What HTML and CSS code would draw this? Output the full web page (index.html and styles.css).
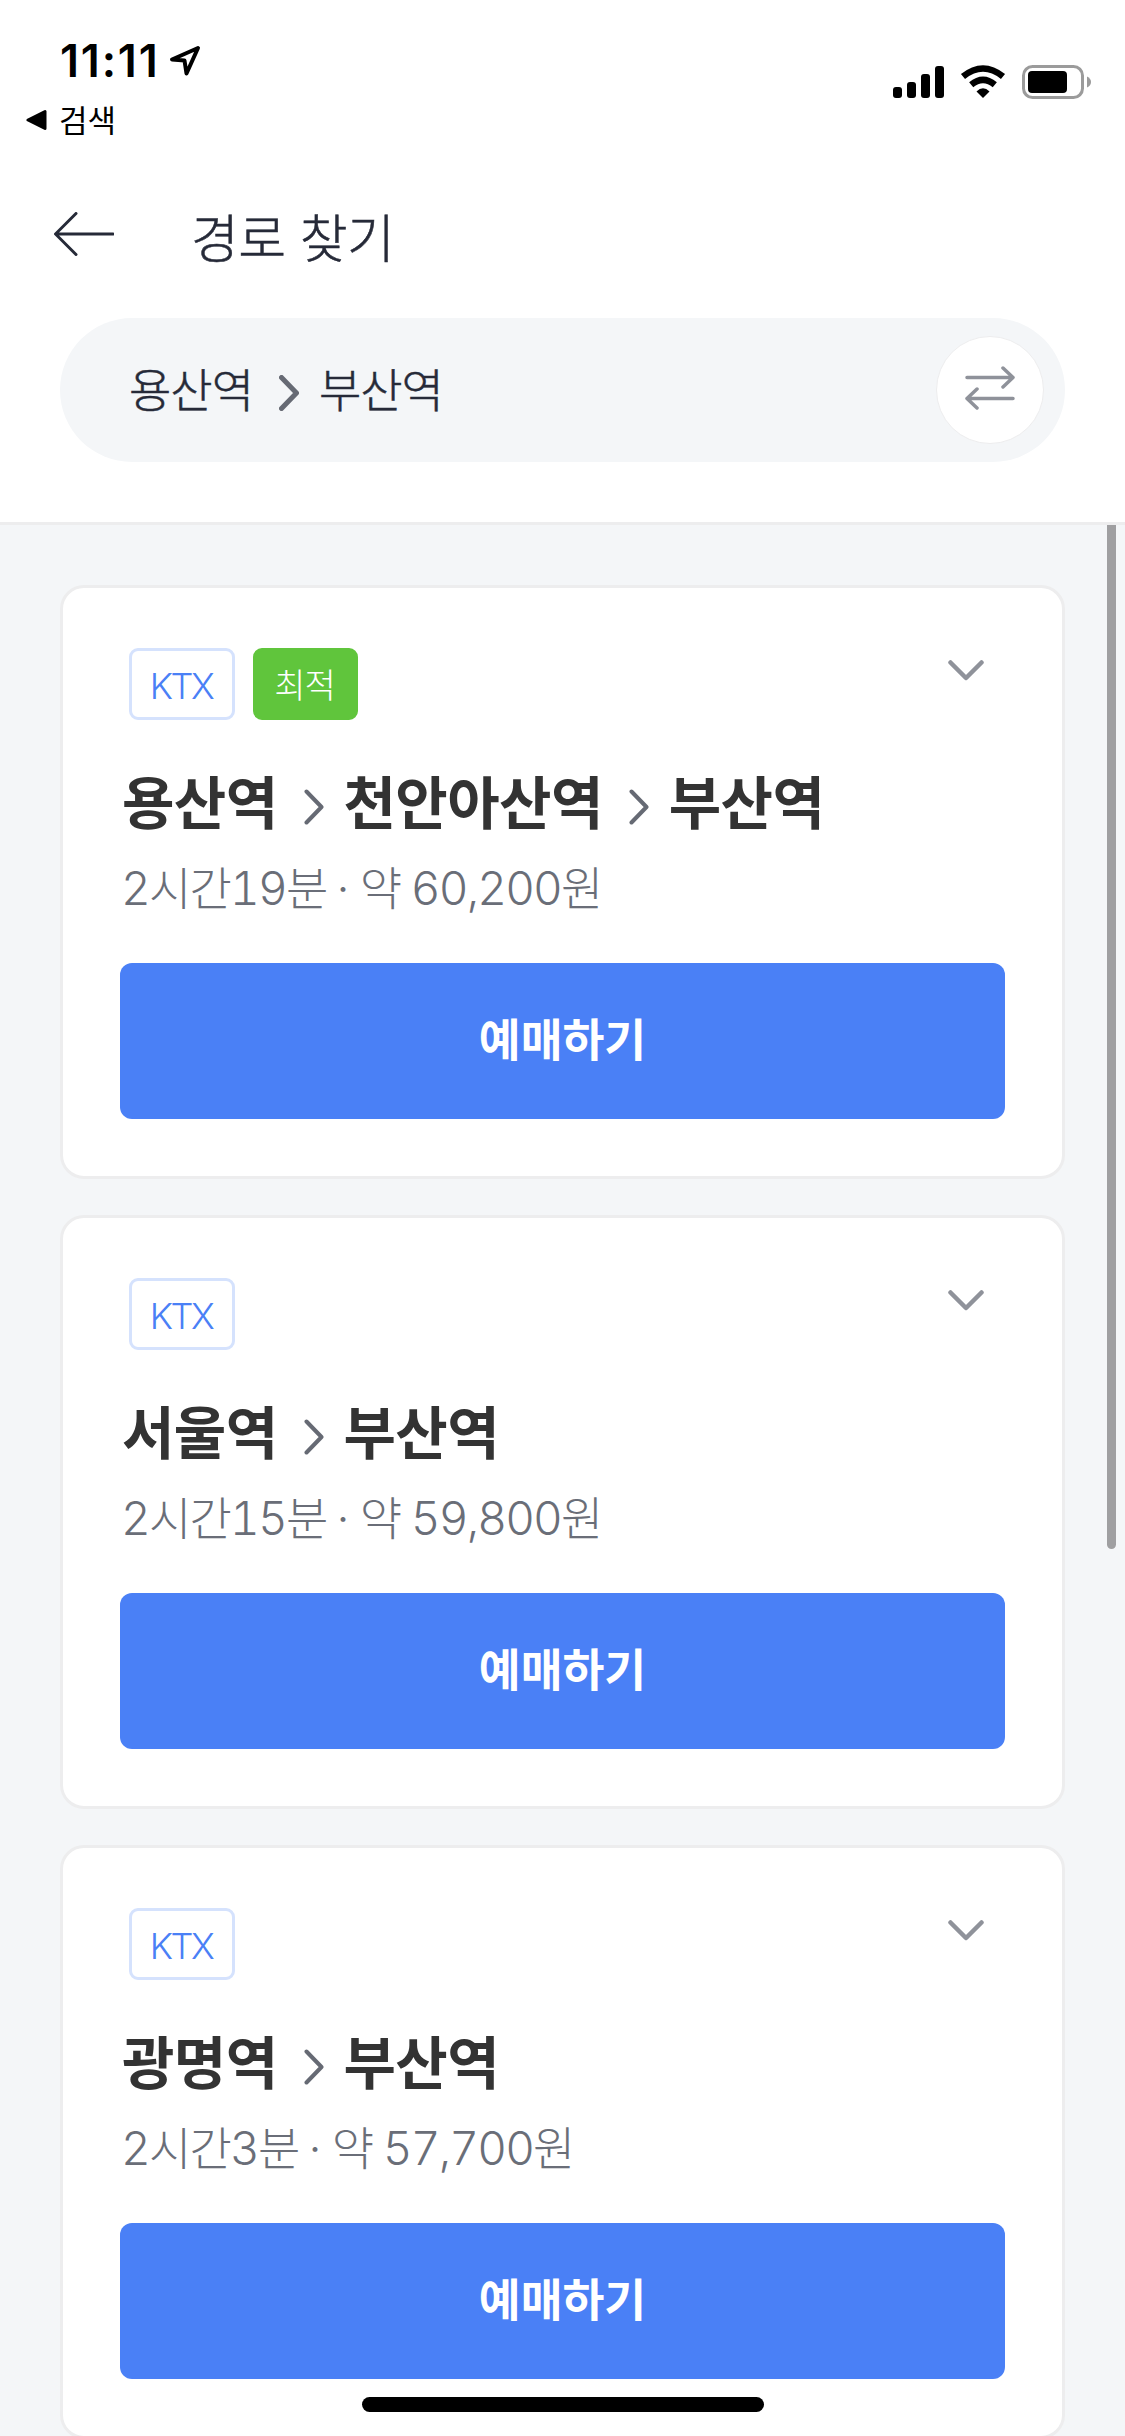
FILE: index.html
```html
<!DOCTYPE html>
<html lang="ko">
<head>
<meta charset="utf-8">
<title>경로 찾기</title>
<link rel="stylesheet" href="styles.css">
</head>
<body>
<svg class="defs" aria-hidden="true">
  <symbol id="next" viewBox="0 0 20 36"><path d="M2.5 2.5 17.5 18 2.5 33.500"/></symbol>
  <symbol id="down" viewBox="0 0 36 21"><path d="M2.500 2.500 18 18 33.500 2.500"/></symbol>
</svg>
<div class="screen">
  <header class="top">
    <div class="status">
      <div class="status-left">
        <div class="clock">
          <span class="time">11:11</span>
          <svg class="location" viewBox="0 0 32 32"><path d="M29 3 3 14.500 15.500 15.500 17.500 28.500Z"/></svg>
        </div>
        <div class="return">
          <svg class="triangle" viewBox="0 0 21 22"><path d="M2 11 19 2.500V19.500Z"/></svg>
          <span class="return-label">검색</span>
        </div>
      </div>
      <svg class="status-icons" viewBox="0 0 199 34">
        <rect x="0" y="22" width="9" height="11" rx="3"/>
        <rect x="14" y="17" width="9" height="16" rx="3"/>
        <rect x="28" y="9" width="9" height="24" rx="3"/>
        <rect x="42" y="1" width="9" height="32" rx="3"/>
        <path class="wave" d="M70 11.500Q90 -4.500 110 11.500"/>
        <path class="wave" d="M78.200 19.700Q90 10 101.800 19.700"/>
        <path d="M90 33 83.500 26.500Q90 20 96.500 26.500Z"/>
        <rect class="shell" x="130.500" y="1.500" width="59" height="31" rx="9"/>
        <rect x="135" y="6" width="39" height="22" rx="4"/>
        <path class="nub" d="M194 11.500Q198 13.500 198 17T194 22.500Z"/>
      </svg>
    </div>
    <div class="titlebar">
      <svg class="back" viewBox="0 0 60 44"><path d="M59 22H2M22 1.500 1.500 22 22 42.500"/></svg>
      <h1 class="title">경로 찾기</h1>
    </div>
    <div class="search">
      <span class="place">용산역</span>
      <svg class="next next-search"><use href="#next"/></svg>
      <span class="place">부산역</span>
      <button class="swap">
        <svg class="swap-icon" viewBox="0 0 50 44"><path d="M2 11.500H48M38 2 48 11.500 38 21M48 32.500H2M12 23 2 32.500 12 42"/></svg>
      </button>
    </div>
  </header>
  <main class="list">
    <article class="card">
      <div class="badges">
        <span class="badge">KTX</span>
        <span class="badge best">최적</span>
        <svg class="down"><use href="#down"/></svg>
      </div>
      <h2 class="route"><span>용산역</span><svg class="next"><use href="#next"/></svg><span>천안아산역</span><svg class="next"><use href="#next"/></svg><span>부산역</span></h2>
      <p class="info">2시간19분<span class="dot">·</span>약 60,200원</p>
      <button class="book">예매하기</button>
    </article>
    <article class="card">
      <div class="badges">
        <span class="badge">KTX</span>
        <svg class="down"><use href="#down"/></svg>
      </div>
      <h2 class="route"><span>서울역</span><svg class="next"><use href="#next"/></svg><span>부산역</span></h2>
      <p class="info">2시간15분<span class="dot">·</span>약 59,800원</p>
      <button class="book">예매하기</button>
    </article>
    <article class="card">
      <div class="badges">
        <span class="badge">KTX</span>
        <svg class="down"><use href="#down"/></svg>
      </div>
      <h2 class="route"><span>광명역</span><svg class="next"><use href="#next"/></svg><span>부산역</span></h2>
      <p class="info">2시간3분<span class="dot">·</span>약 57,700원</p>
      <button class="book">예매하기</button>
    </article>
    <div class="scrollbar"></div>
  </main>
  <div class="home"></div>
</div>
</body>
</html>
```
FILE: styles.css
```css
* { box-sizing: border-box; margin: 0; padding: 0; }

body {
  font-family: "Noto Sans CJK KR", sans-serif;
  color: #262a38;
  background: #f4f6f8;
}

.defs { position: absolute; width: 0; height: 0; }

.screen {
  position: relative;
  width: 1125px;
  height: 2436px;
  overflow: hidden;
  display: flex;
  flex-direction: column;
}

button { border: 0; font: inherit; }

/* Header */
.top {
  flex: none;
  height: 525px;
  background: #fff;
  border-bottom: 3px solid #ededee;
}

.status {
  height: 186px;
  padding: 32px 34px 0 26px;
  display: flex;
  justify-content: space-between;
  color: #000;
}

.clock { display: flex; align-items: center; height: 58px; padding-left: 34px; }
.time { width: 109px; font: 600 45px/58px Inter, sans-serif; letter-spacing: 1.800px; }
.location { width: 32px; height: 32px; fill: none; stroke: #000; stroke-width: 4; stroke-linejoin: round; }
.return { display: flex; align-items: center; height: 58px; gap: 12px; }
.triangle { width: 21px; height: 22px; margin-top: 2px; stroke: #000; stroke-width: 3; stroke-linejoin: round; }
.return-label { font-size: 31px; line-height: 58px; }
.status-icons { width: 199px; height: 34px; margin-top: 33px; margin-right: -1px; }
.wave { fill: none; stroke: #000; stroke-width: 6.500; }
.shell { fill: none; stroke: #9b9b9b; stroke-width: 3; }
.nub { fill: #9b9b9b; }

.titlebar { height: 132px; padding: 12px 0 0 54px; display: flex; }
.back { width: 60px; height: 44px; margin: 14px 77px 0 0; fill: none; stroke: #262a38; stroke-width: 3; stroke-linecap: round; }
.title { font-size: 52px; font-weight: 300; line-height: 76px; letter-spacing: -0.500px; -webkit-text-stroke: 0.500px; }

.search {
  height: 144px;
  margin: 0 60px;
  padding: 0 21px 0 69px;
  border-radius: 72px;
  background: #f4f6f8;
  display: flex;
  align-items: center;
}
.place { font-size: 46px; font-weight: 300; line-height: 70px; margin-top: -6px; letter-spacing: -1px; -webkit-text-stroke: 0.500px; }
.next { width: 20px; height: 36px; fill: none; stroke: #666a74; stroke-width: 4; stroke-linecap: round; stroke-linejoin: round; }
.next-search { margin: 6px 20px 0 26px; stroke-width: 5; }
.swap {
  width: 108px;
  height: 108px;
  margin-left: auto;
  border: 1px solid #ededee;
  border-radius: 50%;
  background: #fff;
  display: grid;
  place-items: center;
}
.swap-icon { width: 50px; height: 44px; margin-top: -4px; fill: none; stroke: #8f929a; stroke-width: 3.500; stroke-linecap: round; stroke-linejoin: round; }

/* Route list */
.list {
  position: relative;
  padding: 60px 60px 0;
  display: flex;
  flex-direction: column;
  gap: 36px;
}
.card {
  height: 594px;
  padding: 60px 57px 57px;
  border: 3px solid #ededee;
  border-radius: 24px;
  background: #fff;
}
.badges { display: flex; gap: 18px; height: 72px; padding-left: 9px; }
.badge {
  width: 106px;
  border: 3px solid #d5e2fd;
  border-radius: 9px;
  color: #4a80f6;
  font-family: Inter, "Noto Sans CJK KR", sans-serif;
  font-size: 36px;
  font-weight: 300;
  line-height: 70px;
  text-align: center;
  letter-spacing: -2.500px;
  text-indent: -2px;
}
.best {
  width: 105px;
  border-color: #60c53c;
  background: #60c53c;
  color: #fff;
  font-family: "Noto Sans CJK KR", sans-serif;
  font-size: 34px;
  line-height: 66px;
  letter-spacing: -1px;
}
.down { width: 36px; height: 21px; margin: 12px 21px 0 auto; fill: none; stroke: #8f929a; stroke-width: 4.500; stroke-linecap: round; stroke-linejoin: round; }
.route {
  height: 80px;
  margin-top: 43px;
  padding-left: 2px;
  display: flex;
  align-items: center;
  color: #333;
  font-size: 57px;
  font-weight: 700;
  line-height: 80px;
  letter-spacing: -0.600px;
}
.route span { margin-top: -8px; }
.route .next { margin: 8px 20px 0 26px; }
.info {
  height: 70px;
  margin-top: 10px;
  padding-left: 1px;
  color: #6a6e78;
  font-family: Inter, "Noto Sans CJK KR", sans-serif;
  font-size: 46px;
  font-weight: 300;
  font-variant-numeric: tabular-nums;
  font-kerning: none;
  line-height: 71px;
  letter-spacing: -1.800px;
  white-space: pre;
}
.dot { margin: 0 12px 0 10px; }
.book {
  display: block;
  width: 100%;
  height: 156px;
  margin-top: 40px;
  padding-bottom: 7px;
  border-radius: 12px;
  background: #4a80f6;
  color: #fff;
  font-size: 45.500px;
  font-weight: 700;
  line-height: 149px;
}

/* Overlays */
.scrollbar {
  position: absolute;
  top: 0;
  right: 9px;
  width: 9px;
  height: 1024px;
  border-radius: 0 0 5px 5px;
  background: #9f9fa1;
}
.home {
  position: absolute;
  bottom: 24px;
  left: 362px;
  width: 402px;
  height: 15px;
  border-radius: 8px;
  background: #000;
}
```
